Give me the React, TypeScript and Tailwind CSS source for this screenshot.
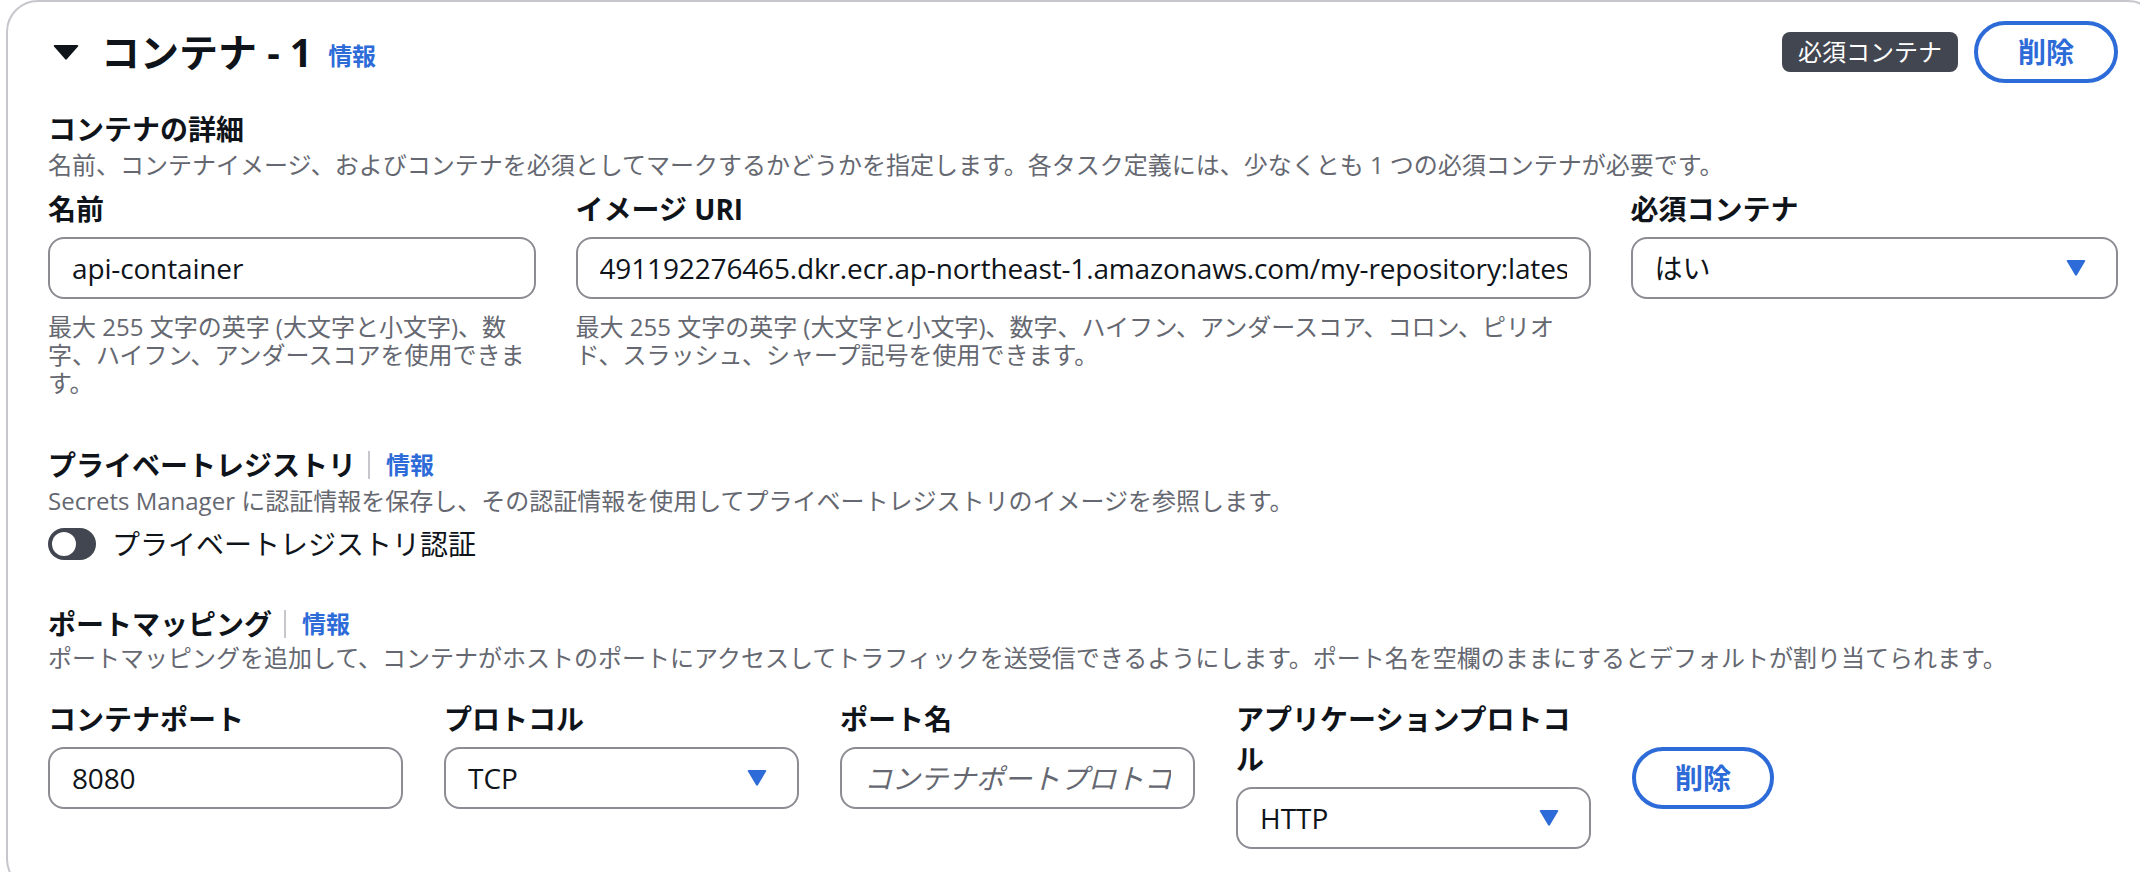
import React from "react";

const BLUE = "text-[#2d6bd8]";

function Caret() {
  return (
    <svg width="20" height="16" viewBox="0 0 20 16" className="shrink-0">
      <path d="M1 1.5 Q0 0 2 0 H18 Q20 0 19 1.5 L11 15 Q10 16.5 9 15 Z" fill="#2d6bd8" />
    </svg>
  );
}

function InfoLink() {
  return <a className={`text-[24px] font-bold leading-[36px] ${BLUE}`}>情報</a>;
}

function SectionHeader({ title }: { title: string }) {
  return (
    <div className="flex items-center h-[36px]">
      <h3 className="text-[28px] font-bold leading-[36px] text-[#0f141a]">{title}</h3>
      <span className="ml-3 mr-4 h-[28px] w-[2px] bg-[#c6c6cd]" />
      <InfoLink />
    </div>
  );
}

function Description({ children }: { children: React.ReactNode }) {
  return <p className="mt-1 text-[24px] leading-[28px] text-[#656871] whitespace-nowrap">{children}</p>;
}

function Label({ children }: { children: React.ReactNode }) {
  return <label className="block text-[28px] font-bold leading-[40px] text-[#0f141a]">{children}</label>;
}

function TextInput({ value, placeholder }: { value?: string; placeholder?: string }) {
  return (
    <input
      readOnly
      value={value}
      placeholder={placeholder}
      className="mt-2 block h-[62px] w-full rounded-[16px] border-2 border-[#8c8c94] bg-white pl-[22px] pr-[22px] text-[28px] tracking-[-0.15px] text-[#0f141a] outline-none placeholder:italic placeholder:tracking-normal placeholder:text-[#656871]"
    />
  );
}

function Select({ value }: { value: string }) {
  return (
    <div className="mt-2 flex h-[62px] w-full items-center justify-between rounded-[16px] border-2 border-[#8c8c94] bg-white pl-[22px] pr-[30px]">
      <span className="text-[28px] text-[#0f141a]">{value}</span>
      <Caret />
    </div>
  );
}

function Hint({ lines }: { lines: string[] }) {
  return (
    <div className="mt-[14px] text-[24px] leading-[28px] text-[#656871]">
      {lines.map((l) => (
        <div key={l} className="whitespace-nowrap">
          {l}
        </div>
      ))}
    </div>
  );
}

function OutlineButton({ className = "" }: { className?: string }) {
  return (
    <button
      className={`flex h-[62px] items-center justify-center rounded-full border-4 border-[#2d6bd8] bg-white text-[28px] font-bold ${BLUE} ${className}`}
    >
      削除
    </button>
  );
}

export default function App() {
  return (
    <div className="min-h-screen w-full overflow-hidden bg-white font-['Open_Sans','Noto_Sans_CJK_JP',sans-serif]">
      <div className="ml-[6px] w-[2154px] rounded-[32px] border-2 border-[#c6c6cd] px-[40px] pt-[19px] pb-10">
        {/* header */}
        <div className="flex h-[62px] items-center justify-between">
          <div className="flex items-center">
            <svg width="26" height="15" viewBox="0 0 26 15" className="ml-[5px]">
              <path d="M1 1.5 Q0 0 2 0 H24 Q26 0 25 1.5 L14 14 Q13 15.5 12 14 Z" fill="#0f141a" />
            </svg>
            <h2 className="ml-[22px] text-[39px] font-bold leading-[44px] text-[#0f141a]">コンテナ - 1</h2>
            <a className={`ml-4 mt-[8px] text-[24px] font-bold ${BLUE}`}>情報</a>
          </div>
          <div className="flex items-center gap-4">
            <span className="flex h-[40px] items-center rounded-[8px] bg-[#424650] px-4 text-[24px] text-white">
              必須コンテナ
            </span>
            <OutlineButton className="w-[144px]" />
          </div>
        </div>

        {/* container details */}
        <h3 className="mt-[28px] text-[28px] font-bold leading-[36px] text-[#0f141a]">コンテナの詳細</h3>
        <Description>
          名前、コンテナイメージ、およびコンテナを必須としてマークするかどうかを指定します。各タスク定義には、少なくとも 1 つの必須コンテナが必要です。
        </Description>

        <div className="mt-[10px] grid grid-cols-4 gap-x-10">
          <div>
            <Label>名前</Label>
            <TextInput value="api-container" />
            <Hint lines={["最大 255 文字の英字 (大文字と小文字)、数", "字、ハイフン、アンダースコアを使用できま", "す。"]} />
          </div>
          <div className="col-span-2">
            <Label>イメージ URI</Label>
            <TextInput value="491192276465.dkr.ecr.ap-northeast-1.amazonaws.com/my-repository:latest" />
            <Hint
              lines={[
                "最大 255 文字の英字 (大文字と小文字)、数字、ハイフン、アンダースコア、コロン、ピリオ",
                "ド、スラッシュ、シャープ記号を使用できます。",
              ]}
            />
          </div>
          <div>
            <Label>必須コンテナ</Label>
            <Select value="はい" />
          </div>
        </div>

        {/* private registry */}
        <div className="mt-[50px]">
          <SectionHeader title="プライベートレジストリ" />
          <Description>
            Secrets Manager に認証情報を保存し、その認証情報を使用してプライベートレジストリのイメージを参照します。
          </Description>
          <div className="mt-[11px] flex h-[36px] items-center">
            <span className="flex h-[32px] w-[48px] items-center rounded-full bg-[#424650] pl-[4px]">
              <span className="h-[24px] w-[24px] rounded-full bg-white" />
            </span>
            <span className="ml-[16px] text-[28px] leading-[36px] text-[#0f141a]">プライベートレジストリ認証</span>
          </div>
        </div>

        {/* port mappings */}
        <div className="mt-[44px]">
          <SectionHeader title="ポートマッピング" />
          <p className="mt-0.5 text-[24px] leading-[28px] text-[#656871] whitespace-nowrap">
            ポートマッピングを追加して、コンテナがホストのポートにアクセスしてトラフィックを送受信できるようにします。ポート名を空欄のままにするとデフォルトが割り当てられます。
          </p>
          <div className="mt-[27px] flex items-start gap-[41px]">
            <div className="w-[355px]">
              <Label>コンテナポート</Label>
              <TextInput value="8080" />
            </div>
            <div className="w-[355px]">
              <Label>プロトコル</Label>
              <Select value="TCP" />
            </div>
            <div className="w-[355px]">
              <Label>ポート名</Label>
              <TextInput placeholder="コンテナポートプロトコル名" />
            </div>
            <div className="w-[355px]">
              <Label>
                アプリケーションプロトコ
                <br />ル
              </Label>
              <Select value="HTTP" />
            </div>
            <OutlineButton className="mt-[48px] w-[142px]" />
          </div>
        </div>
      </div>
    </div>
  );
}
